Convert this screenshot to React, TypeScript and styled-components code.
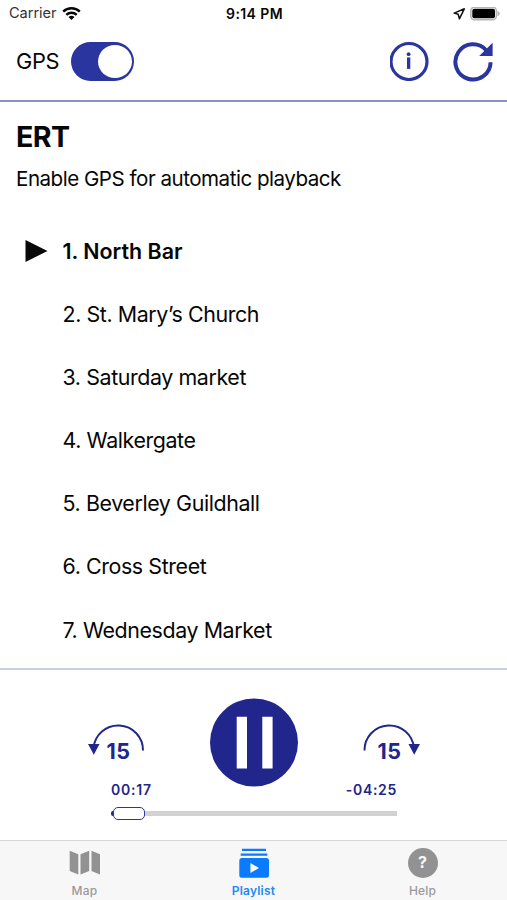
import React from "react";
import styled, { createGlobalStyle } from "styled-components";

const NAVY = "#21268c";
const INDIGO = "#2b35a0";

const Global = createGlobalStyle`
  * { box-sizing: border-box; }
  body { margin: 0; background: #fff; }
  svg { display: block; flex: none; }
`;

const Screen = styled.div`
  width: 507px;
  height: 900px;
  overflow: hidden;
  display: flex;
  flex-direction: column;
  background: #fff;
  color: #060606;
  font-family: Inter, "Liberation Sans", sans-serif;
`;

const Label = styled.span<{ $size: number; $weight?: number; $track?: number; $color?: string }>`
  font-size: ${(p) => p.$size}px;
  font-weight: ${(p) => p.$weight ?? 400};
  letter-spacing: ${(p) => p.$track ?? 0}px;
  color: ${(p) => p.$color ?? "inherit"};
  line-height: 1.2;
  white-space: nowrap;
`;

const StatusBar = styled.div`
  height: 28px;
  flex: none;
  display: grid;
  grid-template-columns: 1fr auto 1fr;
  align-items: center;
  padding: 0 7px 0 9px;
`;

const StatusGroup = styled.div<{ $end?: boolean }>`
  display: flex;
  align-items: center;
  gap: 5px;
  padding-right: ${(p) => (p.$end ? 0 : 3)}px;
  justify-content: ${(p) => (p.$end ? "flex-end" : "flex-start")};
`;

const Header = styled.header`
  height: 74px;
  flex: none;
  display: flex;
  align-items: center;
  padding: 0 13px 6px 16px;
  border-bottom: 2px solid #8592cd;
`;

const Switch = styled.button`
  width: 63px;
  height: 39px;
  margin: 0 auto 0 12px;
  padding: 3px 2px;
  border: 0;
  border-radius: 20px;
  background: ${INDIGO};
  display: flex;
  justify-content: flex-end;
`;

const Knob = styled.span`
  width: 34px;
  height: 33px;
  border-radius: 50%;
  background: #fff;
`;

const HeaderIcons = styled.div`
  display: flex;
  gap: 23px;
`;

const Content = styled.main`
  height: 566px;
  flex: none;
`;

const Intro = styled.div`
  height: 117.5px;
  display: flex;
  flex-direction: column;
  align-items: flex-start;
  padding: 18px 16px 0;
  gap: 13px;
`;

const TrackList = styled.ol`
  list-style: none;
  margin: 0;
  padding: 0;
`;

const Track = styled.li`
  height: 63.15px;
  display: grid;
  grid-template-columns: 37.5px 1fr;
  align-items: center;
  padding-left: 25px;
`;

const TrackLabel = styled(Label)`
  grid-column: 2;
  padding-top: 1px;
`;

const Player = styled.section`
  height: 172px;
  flex: none;
  border-top: 2px solid #cccee6;
  padding: 27px 86px 0;
`;

const Controls = styled.div`
  height: 90px;
  display: flex;
  justify-content: space-between;
  align-items: flex-start;
`;

const Skip = styled.button<{ $shift: number }>`
  width: 60px;
  height: 44px;
  margin-top: 24px;
  padding: 0;
  border: 0;
  background: none;
  font-family: inherit;
  display: grid;
  justify-items: center;

  > * { grid-area: 1 / 1; }
  > span { align-self: start; margin-top: 18px; margin-left: ${(p) => p.$shift}px; }
`;

const Times = styled.div`
  display: flex;
  justify-content: space-between;
  padding: 0 24px 0 25px;
  margin-top: -5px;
`;

const Seek = styled.div`
  margin: 8px 24px 0 25px;
  height: 14px;
  display: flex;
  align-items: center;
`;

const Played = styled.span`
  width: 3px;
  height: 5px;
  border-radius: 2px 0 0 2px;
  background: ${NAVY};
`;

const Thumb = styled.span`
  width: 32px;
  height: 13px;
  border: 1.3px solid ${INDIGO};
  border-radius: 5px;
  margin-left: -1px;
  background: #fff;
`;

const Remaining = styled.span`
  flex: 1;
  height: 5px;
  background: #d2d2d2;
`;

const Tabs = styled.nav`
  height: 60px;
  flex: none;
  display: grid;
  grid-template-columns: repeat(3, 1fr);
  background: #f7f7f7;
  border-top: 1px solid #d8d8d8;
`;

const Tab = styled.div`
  display: flex;
  flex-direction: column;
  align-items: center;
  padding-top: 7px;
  gap: 6px;
`;

const tracks = [
  "1. North Bar",
  "2. St. Mary’s Church",
  "3. Saturday market",
  "4. Walkergate",
  "5. Beverley Guildhall",
  "6. Cross Street",
  "7. Wednesday Market",
];

const WifiIcon = () => (
  <svg width="20" height="14" viewBox="0 0 20 14" fill="none" stroke="#080808" strokeWidth="2.5">
    <path d="M1.2 4.6 A12 12 0 0 1 17.8 4.6" />
    <path d="M4.3 7.8 A7.5 7.5 0 0 1 14.7 7.8" />
    <path d="M6.5 9.9 Q9.5 7.5 12.5 9.9 L9.5 13.1 Z" fill="#080808" stroke="none" />
  </svg>
);

const LocationIcon = () => (
  <svg width="13" height="12" viewBox="0 0 13 12">
    <path d="M12.3 .8 L2.2 5.1 L6.2 6.3 L7.4 10.8 Z" fill="none" stroke="#111" strokeWidth="1.5" strokeLinejoin="round" />
  </svg>
);

const BatteryIcon = () => (
  <svg width="30" height="14" viewBox="0 0 30 14">
    <rect x=".8" y=".3" width="25.6" height="12.4" rx="3.8" fill="#fff" stroke="#b5b5b5" strokeWidth="1.6" />
    <rect x="2.3" y="1.8" width="22.7" height="9.4" rx="2" fill="#000" />
    <path d="M27.5 3.7 Q29.8 4.6 29.8 6.5 Q29.8 8.4 27.5 9.3 Z" fill="#b5b5b5" />
  </svg>
);

const InfoIcon = () => (
  <svg width="40" height="40" viewBox="0 0 40 40">
    <circle cx="19" cy="20.5" r="18" fill="none" stroke={INDIGO} strokeWidth="3.2" />
    <circle cx="18.6" cy="13.2" r="1.9" fill={INDIGO} />
    <rect x="17" y="16.4" width="3.3" height="11.5" fill={INDIGO} />
  </svg>
);

const ReloadIcon = () => (
  <svg width="41" height="41" viewBox="0 0 41 41">
    <path d="M37.6 21.2 A17.6 17.6 0 1 1 33.4 9.5" fill="none" stroke={INDIGO} strokeWidth="4" />
    <path d="M39.6 1.8 V15 H26.2 Z" fill={INDIGO} />
  </svg>
);

const PlayIcon = () => (
  <svg width="23" height="22" viewBox="0 0 23 22">
    <path d="M.5 0 L22.5 11 L.5 22 Z" fill="#080808" />
  </svg>
);

const BackArc = () => (
  <svg width="60" height="44" viewBox="0 0 60 44">
    <path d="M7.5 27 A24.8 24.8 0 0 1 57 29.5" fill="none" stroke={NAVY} strokeWidth="2" />
    <path d="M2 23 H13.5 L7.8 33.8 Z" fill={NAVY} />
  </svg>
);

const ForwardArc = () => (
  <svg width="60" height="44" viewBox="0 0 60 44">
    <path d="M3.5 29.5 A24.8 24.8 0 0 1 53 27" fill="none" stroke={NAVY} strokeWidth="2" />
    <path d="M47.5 23 H59 L53.2 33.8 Z" fill={NAVY} />
  </svg>
);

const PauseIcon = () => (
  <svg width="88" height="90" viewBox="0 0 88 90">
    <circle cx="44" cy="45.5" r="44" fill={NAVY} />
    <path d="M26.7 19.8 H37 V71.6 H26.7 Z M52.3 19.8 H62.6 V71.6 H52.3 Z" fill="#fff" />
  </svg>
);

const MapIcon = () => (
  <svg width="32" height="30" viewBox="0 0 32 30" fill="#929292">
    <path d="M.7 2.8 L9.3 6.3 V26.4 L.7 23 Z M11.5 6.3 L20.2 2.8 V23 L11.5 26.4 Z M22.5 2.8 L31 6.3 V26.4 L22.5 23 Z" />
  </svg>
);

const PlaylistIcon = () => (
  <svg width="30" height="30" viewBox="0 0 30 30" fill="#0a7aff">
    <path d="M3 .8 H27 V3 H3 Z M1.7 5.5 H28.3 V7.8 H1.7 Z" />
    <path fillRule="evenodd" d="M2.5 10.1 H27.5 Q30 10.1 30 12.6 V27.4 Q30 29.8 27.5 29.8 H2.5 Q.3 29.8 .3 27.4 V12.6 Q.3 10.1 2.5 10.1 Z M11.4 15 V25 L20 20 Z" />
  </svg>
);

const HelpDisc = styled.span`
  width: 30px;
  height: 30px;
  border-radius: 50%;
  background: #929292;
  display: grid;
  place-items: center;
`;

export default function App() {
  return (
    <Screen>
      <Global />
      <StatusBar>
        <StatusGroup>
          <Label $size={14.6} $track={-0.05} $color="#333">Carrier</Label>
          <WifiIcon />
        </StatusGroup>
        <Label $size={14} $weight={600} $track={0.4}>9:14 PM</Label>
        <StatusGroup $end>
          <LocationIcon />
          <BatteryIcon />
        </StatusGroup>
      </StatusBar>
      <Header>
        <Label $size={21.8} $track={-0.3}>GPS</Label>
        <Switch aria-label="GPS"><Knob /></Switch>
        <HeaderIcons>
          <InfoIcon />
          <ReloadIcon />
        </HeaderIcons>
      </Header>
      <Content>
        <Intro>
          <Label $size={28.6} $weight={700} $track={-0.6}>ERT</Label>
          <Label $size={20.6} $track={-0.5}>Enable GPS for automatic playback</Label>
        </Intro>
        <TrackList>
          {tracks.map((title, i) => (
            <Track key={title}>
              {i === 0 && <PlayIcon />}
              <TrackLabel $size={21.4} $weight={i === 0 ? 600 : 400} $track={i === 0 ? 0 : -0.4}>{title}</TrackLabel>
            </Track>
          ))}
        </TrackList>
      </Content>
      <Player>
        <Controls>
          <Skip aria-label="Back" $shift={5}>
            <BackArc />
            <Label $size={21.5} $weight={700} $track={0.4} $color={NAVY}>15</Label>
          </Skip>
          <PauseIcon />
          <Skip aria-label="Forward" $shift={-3}>
            <ForwardArc />
            <Label $size={21.5} $weight={700} $track={0.4} $color={NAVY}>15</Label>
          </Skip>
        </Controls>
        <Times>
          <Label $size={14} $weight={600} $track={0.8} $color={NAVY}>00:17</Label>
          <Label $size={14} $weight={600} $track={0.7} $color={NAVY}>-04:25</Label>
        </Times>
        <Seek>
          <Played />
          <Thumb />
          <Remaining />
        </Seek>
      </Player>
      <Tabs>
        <Tab>
          <MapIcon />
          <Label $size={12} $weight={500} $track={0.2} $color="#9a9a9a">Map</Label>
        </Tab>
        <Tab>
          <PlaylistIcon />
          <Label $size={12} $weight={600} $track={0.2} $color="#2388f5">Playlist</Label>
        </Tab>
        <Tab>
          <HelpDisc><Label $size={16} $weight={700} $color="#f7f7f7">?</Label></HelpDisc>
          <Label $size={12} $weight={500} $track={0.2} $color="#9a9a9a">Help</Label>
        </Tab>
      </Tabs>
    </Screen>
  );
}
